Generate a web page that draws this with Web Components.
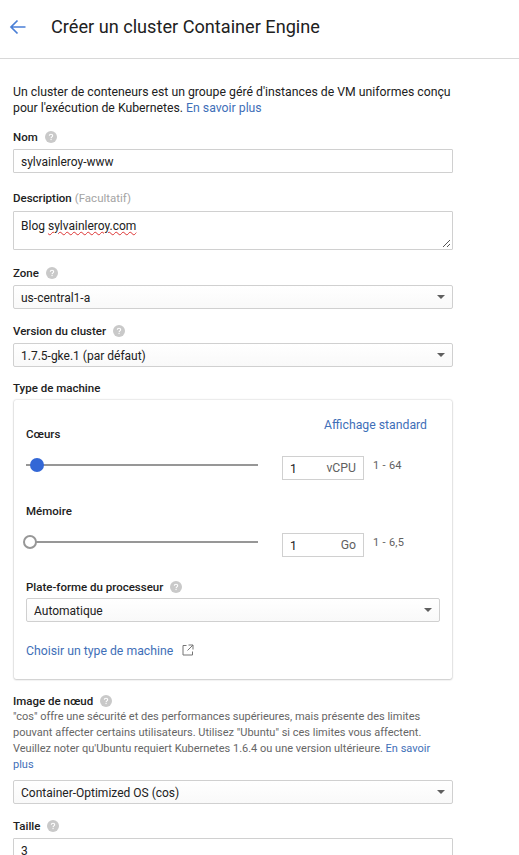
<!DOCTYPE html>
<html lang="fr">
<head>
<meta charset="utf-8">
<title>Créer un cluster Container Engine</title>
<style>
  html, body { margin: 0; height: 855px; overflow: hidden; background: #fff; }
  body { font-family: Roboto, "Liberation Sans", sans-serif; color: #212121; }
</style>
</head>
<body>
<template id="help-tpl">
  <style>
    :host { display: inline-flex; width: 12px; height: 12px; }
    svg { display: block; }
  </style>
  <svg width="12" height="12" viewBox="0 0 12 12">
    <circle cx="6" cy="6" r="6" fill="#c9c9c9"/>
    <path d="M4.3 4.8c0-1 .8-1.6 1.7-1.6s1.7.6 1.7 1.5c0 1.2-1.6 1.2-1.6 2.5" fill="none" stroke="#fff" stroke-width="1.1"/>
    <rect x="5.5" y="8" width="1.1" height="1.1" fill="#fff"/>
  </svg>
</template>

<page-header>Créer un cluster Container Engine</page-header>

<form-page>
  <div style="margin-top:25px;font:400 12.25px/16px Roboto,sans-serif;color:#212121;width:445px">Un cluster de conteneurs est un groupe géré d'instances de VM uniformes conçu pour l'exécution de Kubernetes. <blue-link>En savoir plus</blue-link></div>

  <field-label help style="margin-top:13px">Nom</field-label>
  <text-box style="margin-top:4px">sylvainleroy-www</text-box>

  <field-label note="(Facultatif)" style="margin-top:17px">Description</field-label>
  <text-area style="margin-top:5px">Blog <span style="text-decoration:underline wavy #d33;text-decoration-thickness:1px;text-underline-offset:1px">sylvainleroy.com</span></text-area>

  <field-label help style="margin-top:15px">Zone</field-label>
  <select-box style="margin-top:4px">us-central1-a</select-box>

  <field-label help style="margin-top:14px">Version du cluster</field-label>
  <select-box style="margin-top:4px">1.7.5-gke.1 (par défaut)</select-box>

  <field-label style="margin-top:13px">Type de machine</field-label>
  <machine-card>
    <div style="display:flex;justify-content:flex-end;padding-right:13px;font:400 12.25px/16px Roboto,sans-serif"><blue-link>Affichage standard</blue-link></div>
    <field-label style="margin-top:-7px">Cœurs</field-label>
    <slider-row on value="1" unit="vCPU" range="1 - 64" style="margin-top:14px"></slider-row>
    <field-label style="margin-top:23px">Mémoire</field-label>
    <slider-row value="1" unit="Go" range="1 - 6,5" style="margin-top:14px"></slider-row>
    <field-label help style="margin-top:22px">Plate-forme du processeur</field-label>
    <select-box style="margin-top:3px">Automatique</select-box>
    <div style="display:flex;align-items:center;margin-top:21px;font:400 12.25px/16px Roboto,sans-serif">
      <blue-link>Choisir un type de machine</blue-link>
      <svg width="12" height="12" viewBox="0 0 12 12" style="margin-left:9px;margin-bottom:2px"><path d="M4.5 1.5H1v9.5h9.5V7.5M6.5 1h4.5v4.5M11 1L5.5 6.5" fill="none" stroke="#757575" stroke-width="1"/></svg>
    </div>
  </machine-card>

  <field-label help style="margin-top:14px">Image de nœud</field-label>
  <div style="font:400 11px/16px Roboto,sans-serif;color:#666;width:439px">"cos" offre une sécurité et des performances supérieures, mais présente des limites pouvant affecter certains utilisateurs. Utilisez "Ubuntu" si ces limites vous affectent. Veuillez noter qu'Ubuntu requiert Kubernetes 1.6.4 ou une version ultérieure. <blue-link>En savoir plus</blue-link></div>
  <select-box style="margin-top:7px">Container-Optimized OS (cos)</select-box>

  <field-label help style="margin-top:14px">Taille</field-label>
  <text-box style="margin-top:4px">3</text-box>
</form-page>

<script>
  // Shared helper: builds the shadow root from a style and a markup string
  function shadow(el, style, html) {
    el.attachShadow({mode: 'open'});
    el.shadowRoot.innerHTML = `<style>${style}</style>${html}`;
  }

  class HelpIcon extends HTMLElement {
    constructor() {
      super();
      this.attachShadow({mode: 'open'});
      this.shadowRoot.appendChild(document.getElementById('help-tpl').content.cloneNode(true));
    }
  }
  customElements.define('help-icon', HelpIcon);

  class PageHeader extends HTMLElement {
    constructor() {
      super();
      shadow(this, `
        :host { display: flex; align-items: center; height: 54px; padding-bottom: 4px; border-bottom: 1px solid #d8d8d8; }
        svg { margin-left: 9px; flex: none; }
        h1 { margin: 0 0 0 25px; font: 400 18.15px/24px Roboto, sans-serif; color: #212121; }
      `, `
        <svg width="17" height="16" viewBox="0 0 17 16"><path d="M16.5 8H2M8.5 1.5L2 8l6.5 6.5" fill="none" stroke="#4a7fd6" stroke-width="1.7"/></svg>
        <h1><slot></slot></h1>
      `);
    }
  }
  customElements.define('page-header', PageHeader);

  // Label above a control, with optional help icon and "(Facultatif)" note
  class FieldLabel extends HTMLElement {
    constructor() {
      super();
      const help = this.hasAttribute('help') ? '<help-icon></help-icon>' : '';
      const opt = this.getAttribute('note') ? `<span class="note">${this.getAttribute('note')}</span>` : '';
      shadow(this, `
        :host { display: flex; align-items: center; height: 16px; font: 500 11.5px/16px Roboto, sans-serif; color: #212121; }
        .note { font-weight: 400; color: #a4a4a4; margin-left: 3px; }
        help-icon { margin-left: 7px; }
      `, `<span><slot></slot></span>${opt}${help}`);
    }
  }
  customElements.define('field-label', FieldLabel);

  class TextBox extends HTMLElement {
    constructor() {
      super();
      shadow(this, `
        :host { display: block; box-sizing: border-box; height: 24px; padding: 1px 7px 0; border: 1px solid #d0d0d0; border-radius: 1px; background: #fff; font: 400 12px/22px Roboto, sans-serif; color: #212121; }
      `, `<slot></slot>`);
    }
  }
  customElements.define('text-box', TextBox);

  class TextArea extends HTMLElement {
    constructor() {
      super();
      shadow(this, `
        :host { display: block; position: relative; box-sizing: border-box; height: 39px; padding: 4px 7px; border: 1px solid #d0d0d0; border-radius: 1px; background: #fff; font: 400 12px/20px Roboto, sans-serif; color: #212121; }
        svg { position: absolute; right: 1px; bottom: 1px; }
      `, `
        <slot></slot>
        <svg width="9" height="9" viewBox="0 0 9 9"><path d="M1 8L8 1M5 8L8 5" stroke="#555" stroke-width="1" fill="none"/></svg>
      `);
    }
  }
  customElements.define('text-area', TextArea);

  class SelectBox extends HTMLElement {
    constructor() {
      super();
      shadow(this, `
        :host { display: flex; align-items: center; justify-content: space-between; box-sizing: border-box; height: 24px; padding: 1px 8px 0 7px; border: 1px solid #d0d0d0; border-radius: 2px; background: linear-gradient(#fff, #f9f9f9); font: 400 12px/22px Roboto, sans-serif; color: #212121; }
        i { width: 0; height: 0; margin: -1px -1px 0 0; border-left: 4px solid transparent; border-right: 4px solid transparent; border-top: 4px solid #5f5f5f; }
      `, `<span><slot></slot></span><i></i>`);
    }
  }
  customElements.define('select-box', SelectBox);

  // One slider row: track, numeric box with its unit, allowed range
  class SliderRow extends HTMLElement {
    constructor() {
      super();
      const on = this.hasAttribute('on');
      shadow(this, `
        :host { display: flex; align-items: center; height: 24px; }
        .track { position: relative; width: 232px; height: 2px; margin-bottom: 6px; background: #979797; }
        .thumb { position: absolute; top: 50%; box-sizing: border-box; border-radius: 50%; }
        .thumb.on { left: 4px; width: 14px; height: 14px; margin-top: -7px; background: #3367d6; }
        .thumb.off { left: -3px; width: 14px; height: 14px; margin-top: -7px; background: #fff; border: 2px solid #979797; }
        .box { display: flex; justify-content: space-between; box-sizing: border-box; width: 82px; height: 24px; margin-left: 24px; padding: 0 7px; border: 1px solid #d0d0d0; font: 400 12.25px/22px Roboto, sans-serif; }
        .num { color: #212121; padding-top: 1px; }
        .unit { color: #616161; }
        .range { margin: 0 0 5px 9px; font: 400 11px/14px Roboto, sans-serif; letter-spacing: .3px; color: #616161; }
      `, `
        <div class="track"><div class="thumb ${on ? 'on' : 'off'}"></div></div>
        <div class="box"><span class="num">${this.getAttribute('value')}</span><span class="unit">${this.getAttribute('unit')}</span></div>
        <div class="range">${this.getAttribute('range')}</div>
      `);
    }
  }
  customElements.define('slider-row', SliderRow);

  class MachineCard extends HTMLElement {
    constructor() {
      super();
      shadow(this, `
        :host { display: block; box-sizing: border-box; height: 279px; margin: 4px 1px 0; padding: 17px 12px 0 12px; background: #fff; border-radius: 2px; box-shadow: 0 0 2px rgba(0,0,0,.28), 0 1px 2px rgba(0,0,0,.14); }
      `, `<slot></slot>`);
    }
  }
  customElements.define('machine-card', MachineCard);

  class BlueLink extends HTMLElement {
    constructor() {
      super();
      shadow(this, `
        :host { display: inline; color: #3f6fb8; }
      `, `<slot></slot>`);
    }
  }
  customElements.define('blue-link', BlueLink);

  class FormPage extends HTMLElement {
    constructor() {
      super();
      shadow(this, `
        :host { display: block; padding: 0 66px 0 14px; margin-left: -1px; }
      `, `<slot></slot>`);
    }
  }
  customElements.define('form-page', FormPage);
</script>
</body>
</html>
